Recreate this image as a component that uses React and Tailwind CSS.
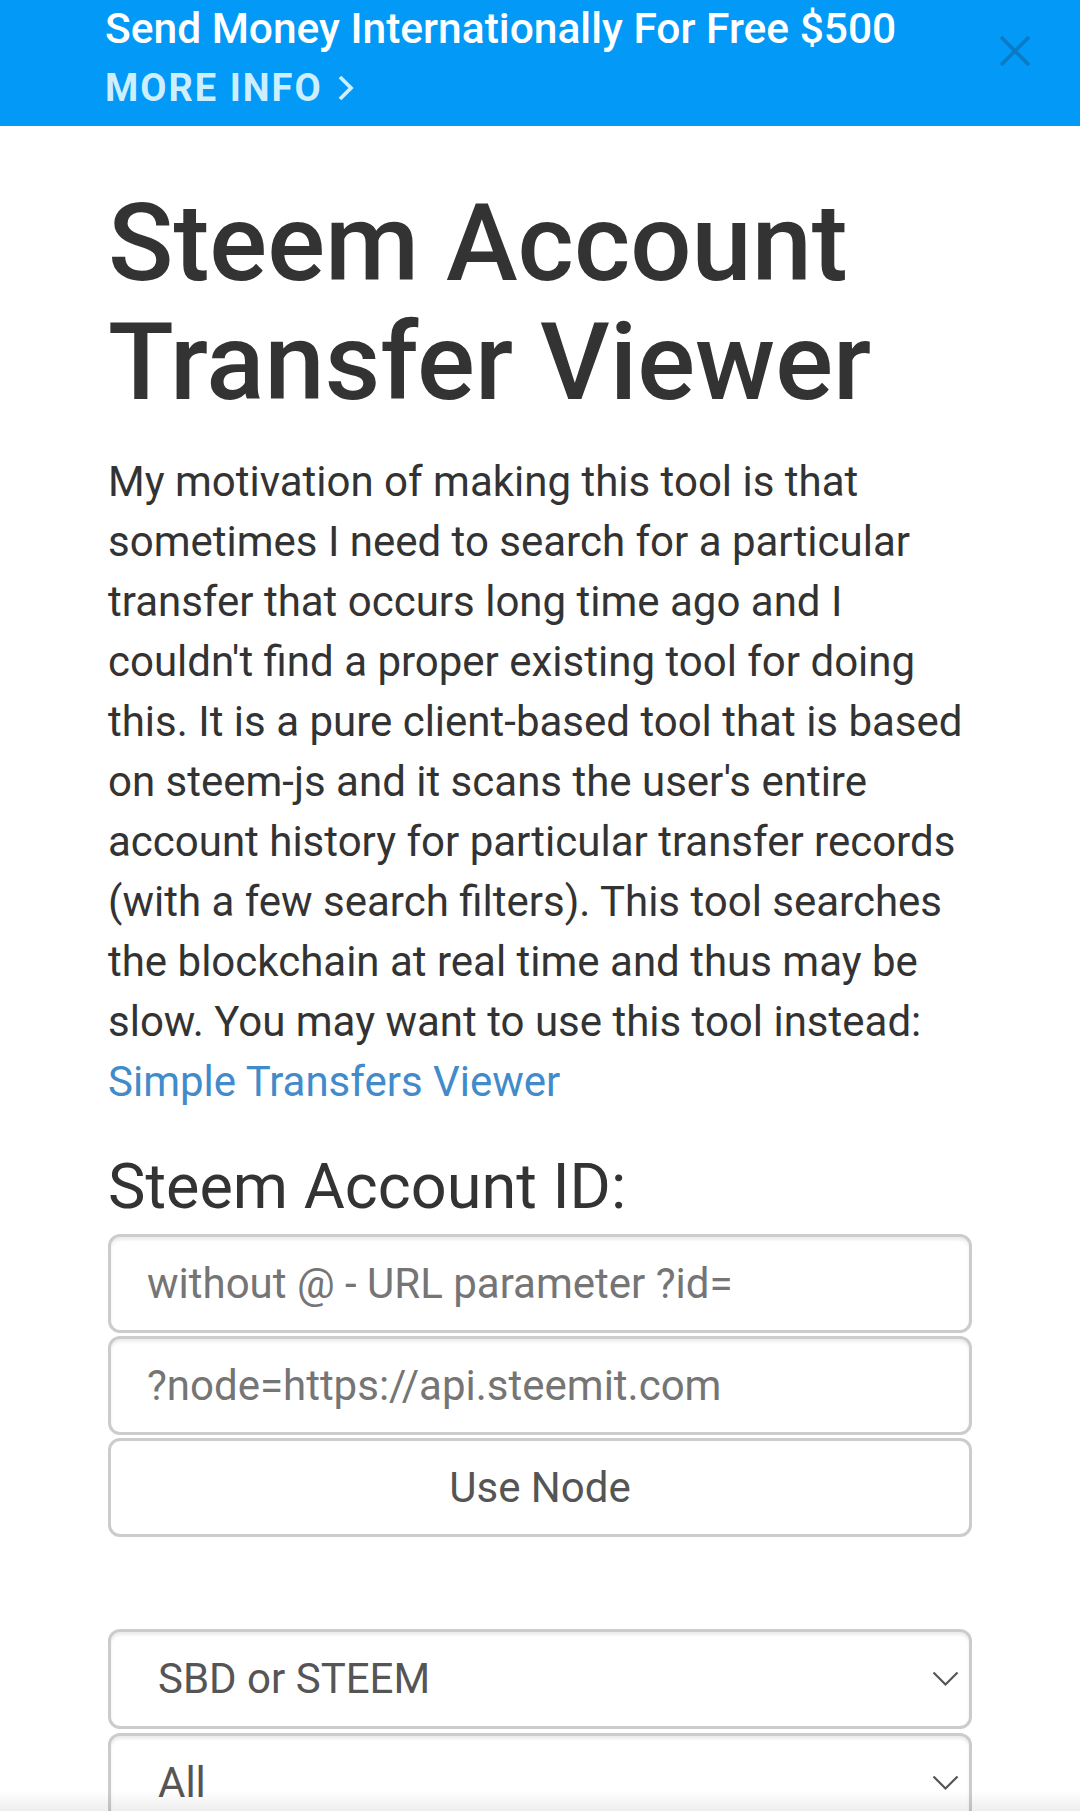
import React from "react";

const Chevron = () => (
  <svg width="27" height="16" viewBox="0 0 27 16" fill="none" className="shrink-0">
    <polyline points="1.5,1.5 13.5,13.5 25.5,1.5" stroke="#555" strokeWidth="2.2" fill="none" />
  </svg>
);

export default function App() {
  return (
    <div className="relative h-[1811px] overflow-hidden bg-white text-[#333]" style={{ fontFamily: "Roboto, 'Noto Sans', sans-serif" }}>
      {/* Banner */}
      <div className="relative h-[126px] bg-[#0399f6] pl-[105px] pt-[4px]">
        <div className="text-[42.5px] leading-[50px] font-medium text-white whitespace-nowrap">
          Send Money Internationally For Free $500
        </div>
        <div className="mt-[9px] flex items-center text-[38px] leading-[50px] font-bold tracking-[2px] text-[#cdeefd]">
          <span>MORE INFO</span>
          <svg width="16" height="26" viewBox="0 0 16 26" className="ml-[15px]" fill="none">
            <polyline points="2,2 13,13 2,24" stroke="#cdeefd" strokeWidth="3.8" fill="none" />
          </svg>
        </div>
        <svg
          className="absolute left-[999px] top-[35px]"
          width="32"
          height="32"
          viewBox="0 0 32 32"
          fill="none"
        >
          <line x1="2" y1="2" x2="30" y2="30" stroke="#0a7ac4" strokeWidth="3.6" />
          <line x1="30" y1="2" x2="2" y2="30" stroke="#0a7ac4" strokeWidth="3.6" />
        </svg>
      </div>

      {/* Content */}
      <div className="px-[108px]">
        <h1 className="mt-[58px] text-[108px] leading-[1.1] font-medium text-[#333]">
          Steem Account Transfer Viewer
        </h1>
        <p className="mt-[30px] text-[42px] leading-[60px] text-[#333]">
          My motivation of making this tool is that sometimes I need to search for a particular transfer that occurs
          long time ago and I couldn't find a proper existing tool for doing this. It is a pure client-based tool that
          is based on steem-js and it scans the user's entire account history for particular transfer records (with a
          few search filters). This tool searches the blockchain at real time and thus may be slow. You may want to use
          this tool instead: <span className="text-[#428bca]">Simple Transfers Viewer</span>
        </p>

        <h3 className="mt-[40px] text-[63px] leading-[1.1] font-normal text-[#333]">Steem Account ID:</h3>

        <div className="mt-[13px] flex flex-col gap-[3px]">
          <div className="flex h-[99px] items-center rounded-[12px] border-[3px] border-[#ccc] bg-white px-[36px] shadow-[inset_0_3px_3px_rgba(0,0,0,0.075)]">
            <span className="text-[42px] text-[#757575]">without @ - URL parameter ?id=</span>
          </div>
          <div className="flex h-[99px] items-center rounded-[12px] border-[3px] border-[#ccc] bg-white px-[36px] shadow-[inset_0_3px_3px_rgba(0,0,0,0.075)]">
            <span className="text-[42px] text-[#757575]">?node=https://api.steemit.com</span>
          </div>
          <div className="flex h-[99px] items-center justify-center rounded-[12px] border-[3px] border-[#ccc] bg-white">
            <span className="text-[42px] text-[#555]">Use Node</span>
          </div>
        </div>

        <div className="mt-[92px] flex flex-col gap-[4px]">
          <div className="flex h-[100px] items-center justify-between rounded-[12px] border-[3px] border-[#ccc] bg-white pl-[47px] pr-[10px] shadow-[inset_0_3px_3px_rgba(0,0,0,0.075)]">
            <span className="text-[42px] text-[#555]">SBD or STEEM</span>
            <Chevron />
          </div>
          <div className="flex h-[100px] items-center justify-between rounded-[12px] border-[3px] border-[#ccc] bg-white pl-[47px] pr-[10px] shadow-[inset_0_3px_3px_rgba(0,0,0,0.075)]">
            <span className="text-[42px] text-[#555]">All</span>
            <Chevron />
          </div>
        </div>
      </div>

      <div className="pointer-events-none absolute bottom-0 left-0 right-0 h-[20px] bg-gradient-to-b from-[rgba(0,0,0,0)] to-[rgba(0,0,0,0.07)]" />
    </div>
  );
}
